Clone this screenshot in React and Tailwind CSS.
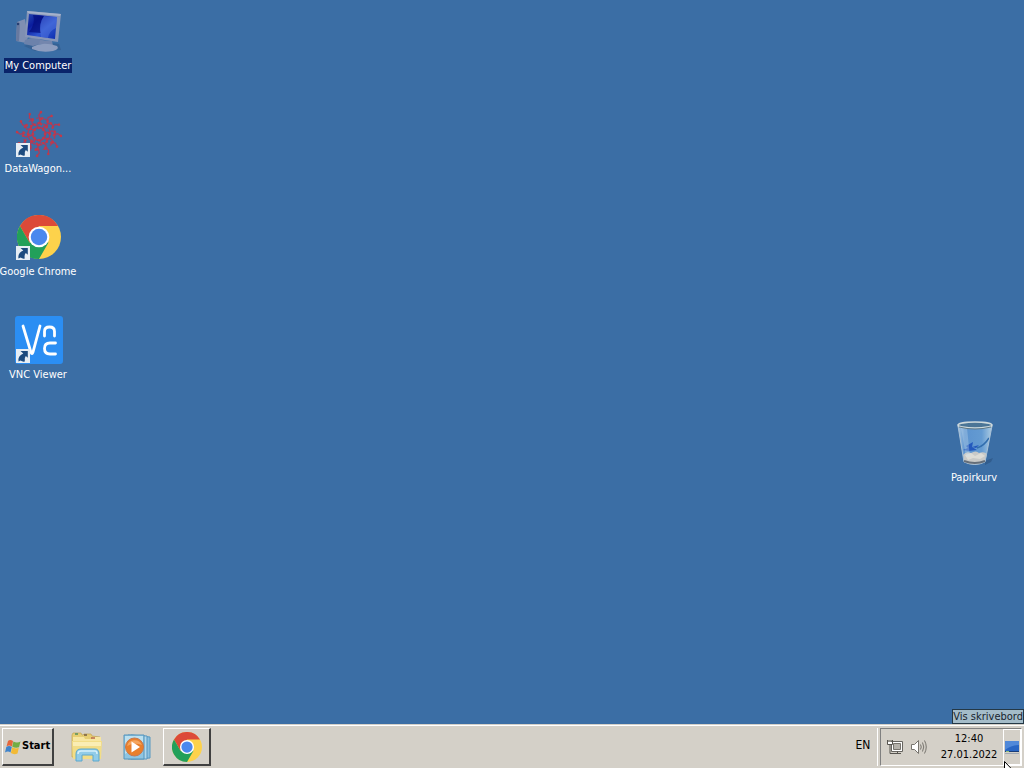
import React from "react";

function ChromeLogo({ className }) {
  return (
    <svg viewBox="0 0 48 48" className={className} aria-hidden="true">
      <circle cx="24" cy="24" r="24" fill="#fdd24b" />
      <path d="M24 12H44.8A24 24 0 0 0 3.2 12L13.6 30Z" fill="#dc4a38" />
      <path d="M3.2 12A24 24 0 0 0 24 48L34.4 30L13.6 30Z" fill="#22a05a" />
      <circle cx="24" cy="24" r="11.3" fill="#fff" />
      <circle cx="24" cy="24" r="9" fill="#4a88ee" />
    </svg>
  );
}

function ShortcutBadge() {
  return (
    <svg viewBox="0 0 14 14" className="absolute bottom-px left-px h-3.5 w-3.5" aria-hidden="true">
      <rect width="14" height="14" fill="#e6edf4" />
      <path d="M4.500 2H11.800V8.800L9.800 7Q8 9 8.800 12.500Q6.500 13 4.500 11.500L2.500 12.500Q1.500 7 7.300 4.500Z" fill="#1c4a7e" />
    </svg>
  );
}

function ComputerIcon() {
  return (
    <svg viewBox="0 0 48 48" className="h-12 w-12" aria-hidden="true">
      <defs>
        <linearGradient id="screen" x1="0" y1="0" x2="1" y2="1">
          <stop offset="0" stopColor="#2447b0" />
          <stop offset=".3" stopColor="#0a1c9e" />
          <stop offset=".6" stopColor="#2d55d0" />
          <stop offset="1" stopColor="#0c2cae" />
        </linearGradient>
      </defs>
      <path d="M9 39L20 44L46 43L44 37L20 34Z" fill="#2f5585" opacity=".5" />
      <path d="M2 15L10 12L13 30L11 36L1 34Z" fill="#7f8fb2" />
      <path d="M2 15L5 16L4 34L1 34Z" fill="#68799f" />
      <path d="M10 33L19 30L32 35L18 39L9 37Z" fill="#6c82ab" />
      <path d="M25 33L37 34L38 39L24 37Z" fill="#7486ad" />
      <path d="M17 40Q28 34 42 39Q45 42 38 44Q26 46 17 42Z" fill="#8d9dbf" />
      <path d="M12 4L46 7L43 35L10 30Z" fill="#8796b8" />
      <path d="M12 4L46 7L45 9L13 6Z" fill="#a5b2cb" />
      <path d="M14 7L42 10L40 32L12 28Z" fill="url(#screen)" />
      <path d="M18 8L29 9Q23 17 26 26L14 25Q21 16 18 8Z" fill="#040f80" opacity=".75" />
      <path d="M29 9L42 10L41 21Q34 24 33 31L26 30Q23 17 29 9Z" fill="#5377df" opacity=".5" />
      <circle cx="3" cy="17" r="1.2" fill="#263e71" />
    </svg>
  );
}

const RINGS = [
  { count: 8, inner: 6, outer: 11, twist: 0 },
  { count: 10, inner: 10, outer: 16, twist: 12 },
  { count: 12, inner: 15, outer: 22, twist: 5 },
];

function WagonIcon() {
  return (
    <svg viewBox="0 0 48 48" className="h-12 w-12" aria-hidden="true">
      <g fill="none" stroke="#b03a5a" strokeWidth="1.2">
        <circle cx="24" cy="24" r="6.500" strokeWidth="1.6" />
        <circle cx="24" cy="24" r="11" strokeDasharray="5 2" />
        <circle cx="24" cy="24" r="16" strokeDasharray="5 3" />
        {RINGS.map((ring) =>
          Array.from({ length: ring.count }, (_, i) => (
            <g key={`${ring.count}-${i}`} transform={`rotate(${(i * 360) / ring.count + ring.twist} 24 24)`}>
              <path d={`M24 ${24 - ring.inner}L22 ${24 - (ring.inner + ring.outer) / 2}L24 ${24 - ring.outer}`} />
              <circle cx="24" cy={24 - ring.outer} r="1.3" fill="#c03a4a" stroke="none" />
              <circle cx="24" cy={24 - ring.inner} r="1.3" fill="#c03a4a" stroke="none" />
            </g>
          ))
        )}
      </g>
    </svg>
  );
}

function VncIcon() {
  return (
    <svg viewBox="0 0 48 48" className="h-12 w-12" aria-hidden="true">
      <rect width="48" height="48" rx="3" fill="#2b8ef3" />
      <g fill="none" stroke="#fff" strokeWidth="2.8" strokeLinecap="round">
        <path d="M8 10L16 36.5Q17 39 18 36L25 10" />
        <path d="M29.500 20V15.500Q29.500 11 34.500 11Q39.500 11 39.500 15.500V20" />
        <path d="M40.500 27H35Q29.500 27 29.500 32.500Q29.500 38 35 38H40.500" />
      </g>
    </svg>
  );
}

function BinIcon() {
  return (
    <svg viewBox="0 0 48 48" className="h-12 w-12" aria-hidden="true">
      <defs>
        <linearGradient id="glass" x1="0" x2="1">
          <stop offset="0" stopColor="#a9c8e4" />
          <stop offset=".2" stopColor="#5c93cf" />
          <stop offset=".7" stopColor="#649bd2" />
          <stop offset="1" stopColor="#adcce2" />
        </linearGradient>
      </defs>
      <path d="M34 42L42 39L40 43L34 46Z" fill="#274c78" opacity=".5" />
      <path d="M7 7L13 43Q24 48 34 43L41 7Z" fill="url(#glass)" />
      <path d="M12 36Q15 32 20 34Q25 31 28 34Q33 32 36 35L34 43Q24 48 13 43Z" fill="#c8c9c7" />
      <path d="M14 36L20 34L24 37L30 34L34 37L29 40L22 39L17 41Z" fill="#dddcd6" />
      <path d="M15 27L22 23L21 28L26 31L18 32L12 31L17 29ZM21 28L25 29L28 26" fill="#2459bd" />
      <path d="M26 29Q33 27 38 19" fill="none" stroke="#316eae" strokeWidth="1.5" />
      <path d="M10 9L15 38L19 38L16 9Z" fill="#d1e3f2" opacity=".3" />
      <path d="M7 7L13 43Q24 48 34 43L41 7" fill="none" stroke="#a9c1d6" strokeWidth="1" />
      <path d="M13 42Q24 46 34 42" fill="none" stroke="#646e79" strokeWidth="2" />
      <ellipse cx="24" cy="6" rx="17" ry="3" fill="#4b7596" stroke="#ced9dc" strokeWidth="1.6" />
      <path d="M8 8Q24 12 40 8" fill="none" stroke="#5d7785" strokeWidth="1" />
    </svg>
  );
}

function WindowsFlag() {
  return (
    <svg viewBox="0 0 16 16" className="h-4 w-4 shrink-0" aria-hidden="true">
      <path d="M3 2Q5 0 8 2L7 7.500Q4 5.500 1.500 7.500Z" fill="#e4663b" />
      <path d="M8.400 2.500Q12 4.500 15.500 2.500L14 8.300Q10.500 9.500 7.300 7.700Z" fill="#72ad45" />
      <path d="M1.300 8Q4 6 6.800 8L5.500 13.500Q3 11.500 0 13.500Z" fill="#3e83cb" />
      <path d="M7.200 8.300Q10.500 10.300 13.800 8.800L12.500 14.500Q9 16 5.900 14Z" fill="#f2ba36" />
    </svg>
  );
}

function ExplorerIcon() {
  return (
    <svg viewBox="0 0 32 32" className="h-8 w-8" aria-hidden="true">
      <path d="M1 4L2 2H10L11 4H12L13 3H20L21 5L29 6V26H1Z" fill="#e7ce72" stroke="#c2a451" strokeWidth=".7" />
      <path d="M2 6H13L14 8H21L22 6H30V27H2Z" fill="#f7e6a1" />
      <path d="M1 10H31L30 28H2Z" fill="#f2dd87" />
      <path d="M2 11H30V15H2Z" fill="#faedb4" />
      <path d="M4 3H7" stroke="#54915c" strokeWidth="1.5" />
      <path d="M13 4H16" stroke="#745b45" strokeWidth="1.5" />
      <path d="M20 7H24" stroke="#ba684d" strokeWidth="1.5" />
      <path d="M5 30V23Q5 18 10 18H24Q28 18 28 23V30H22V24H11V30Z" fill="#91cce8" stroke="#5ca8cd" strokeWidth="1" />
      <path d="M7 23Q7 20 10 20H24Q26 20 26 23" fill="none" stroke="#d5effa" strokeWidth="1.5" />
    </svg>
  );
}

function MediaIcon() {
  return (
    <svg viewBox="0 0 32 32" className="h-8 w-8" aria-hidden="true">
      <path d="M10 4L29 6V27L10 28Z" fill="#8cc0df" stroke="#5798c0" />
      <path d="M7 4L26 5V28H7Z" fill="#b3d8eb" stroke="#5698c2" />
      <path d="M3 4H23V28H3Z" fill="#8ec5e2" stroke="#5594bc" />
      <path d="M4 5H22V11L4 23Z" fill="#bce0ef" />
      <circle cx="13.500" cy="16" r="9" fill="#e97f2b" stroke="#c9754b" />
      <path d="M6 15A8 8 0 0 1 21 14Q13 11 6 15Z" fill="#f5a55e" />
      <path d="M10.500 10.500L19 16L10.500 21.500Z" fill="#fff" />
    </svg>
  );
}

function NetworkIcon() {
  return (
    <svg viewBox="0 0 16 16" className="h-4 w-4" aria-hidden="true">
      <path d="M4.500 2.500H15.500V12.500H4.500Z" fill="#fff" stroke="#66645f" />
      <path d="M6.500 4.500H13.500V10.500H6.500Z" fill="#b5b2ab" stroke="#77746e" />
      <path d="M6 14.500H14M10.500 12.500V14.500" stroke="#56544f" />
      <path d="M.5 1V5.500H5.500V1M2 1V4M4 1V4M3 6V14.500H7" fill="none" stroke="#56544f" />
      <path d="M1 3H5V5H1Z" fill="#fff" />
    </svg>
  );
}

function VolumeIcon() {
  return (
    <svg viewBox="0 0 16 16" className="h-4 w-4" aria-hidden="true">
      <path d="M.5 5.500H3.500L7.500 1.500V14.500L3.500 10.500H.5Z" fill="#fff" stroke="#77746e" />
      <path d="M9.500 5.500Q11 8 9.500 10.500M11.500 3.500Q14 8 11.500 12.500M13.500 1.500Q17 8 13.500 14.500" fill="none" stroke="#77746e" />
    </svg>
  );
}

function DesktopGlyph() {
  return (
    <svg viewBox="0 0 16 16" className="h-4 w-4 shrink-0" aria-hidden="true">
      <path d="M1 2H15V13H1Z" fill="#2966c4" />
      <path d="M1 2H15V6Q7 6 1 11Z" fill="#5189d9" />
      <path d="M1 12.500H15" stroke="#193d78" />
      <path d="M1 14.500H15" stroke="#a2aab3" />
      <path d="M2 12.500H5" stroke="#8dc07c" />
    </svg>
  );
}

function DesktopIcon({ label, icon, shortcut, selected }) {
  return (
    <button type="button" className="flex w-19 flex-col items-center gap-0.75">
      <span className="relative ml-0.5 block">
        {icon}
        {shortcut && <ShortcutBadge />}
      </span>
      <span className={selected ? "bg-[#0a246a] px-px leading-3.75" : "px-px leading-3.75"}>{label}</span>
    </button>
  );
}

export default function App() {
  return (
    <div className="flex min-h-screen cursor-default flex-col overflow-hidden bg-[#3b6ea5] font-['DejaVu_Sans_Condensed','DejaVu_Sans',sans-serif] text-[11px] whitespace-nowrap text-black">
      <main className="flex flex-1 items-start justify-between pt-1.75 pr-3 text-white">
        <div className="grid auto-rows-[103px] items-start">
          <DesktopIcon label="My Computer" icon={<ComputerIcon />} selected />
          <DesktopIcon label="DataWagon..." icon={<WagonIcon />} shortcut />
          <DesktopIcon
            label="Google Chrome"
            icon={<span className="flex h-12 w-12 items-center justify-center"><ChromeLogo className="h-11 w-11" /></span>}
            shortcut
          />
          <DesktopIcon label="VNC Viewer" icon={<VncIcon />} shortcut />
        </div>
        <div className="pt-103">
          <DesktopIcon label="Papirkurv" icon={<BinIcon />} />
        </div>
      </main>

      <footer className="relative flex h-11 items-center border-t border-[#d4d0c8] bg-[#d4d0c8] pt-px shadow-[inset_0_1px_0_#ffffff]">
        <button
          type="button"
          className="ml-0.5 flex h-9.5 w-13 items-center gap-px border-t border-r-2 border-b-2 border-l border-t-white border-r-[#404040] border-b-[#404040] border-l-white pl-0.5 font-bold"
        >
          <WindowsFlag />
          Start
        </button>
        <nav className="ml-3.75 flex items-center" aria-label="Taskbar">
          <button type="button" aria-label="Windows Explorer" className="flex h-9.5 w-9 items-center justify-center">
            <ExplorerIcon />
          </button>
          <button type="button" aria-label="Media Player" className="ml-3.5 flex h-9.5 w-9 items-center justify-center">
            <MediaIcon />
          </button>
          <button
            type="button"
            aria-label="Google Chrome"
            className="ml-2 flex h-9.5 w-12 items-center justify-center border-t border-r-2 border-b-2 border-l border-t-white border-r-[#404040] border-b-[#404040] border-l-white"
          >
            <ChromeLogo className="h-7.5 w-7.5" />
          </button>
        </nav>

        <div className="ml-auto flex h-9.5 items-stretch">
          <button type="button" aria-label="Language" className="mr-1 w-5 pb-1 text-[12px]">EN</button>
          <div className="mr-0.5 w-px bg-white" />
          <div className="mr-0.5 flex items-stretch border border-t-[#808080] border-r-white border-b-white border-l-[#808080] pl-1.5">
            <button type="button" aria-label="Network"><NetworkIcon /></button>
            <button type="button" aria-label="Volume" className="ml-2"><VolumeIcon /></button>
            <button type="button" aria-label="Clock" className="ml-3 w-15 text-center leading-4">
              <time dateTime="2022-01-27T12:40">12:40<br />27.01.2022</time>
            </button>
            <button type="button" aria-label="Vis skrivebord" className="ml-1 flex w-4.5 items-center justify-center border border-white">
              <DesktopGlyph />
            </button>
          </div>
        </div>

        <div role="tooltip" className="absolute right-0 bottom-11 border border-[#243846] bg-[#a4bcc9] leading-3.25 text-[#17242e]">
          Vis skrivebord
        </div>
        <svg viewBox="0 0 12 19" className="absolute right-2 -bottom-3 h-4.75 w-3" aria-hidden="true">
          <path d="M.5.5V16L4.300 12.500L7 18.500L9 17.500L6.500 12H11.500Z" fill="#fff" stroke="#000" />
        </svg>
      </footer>
    </div>
  );
}
